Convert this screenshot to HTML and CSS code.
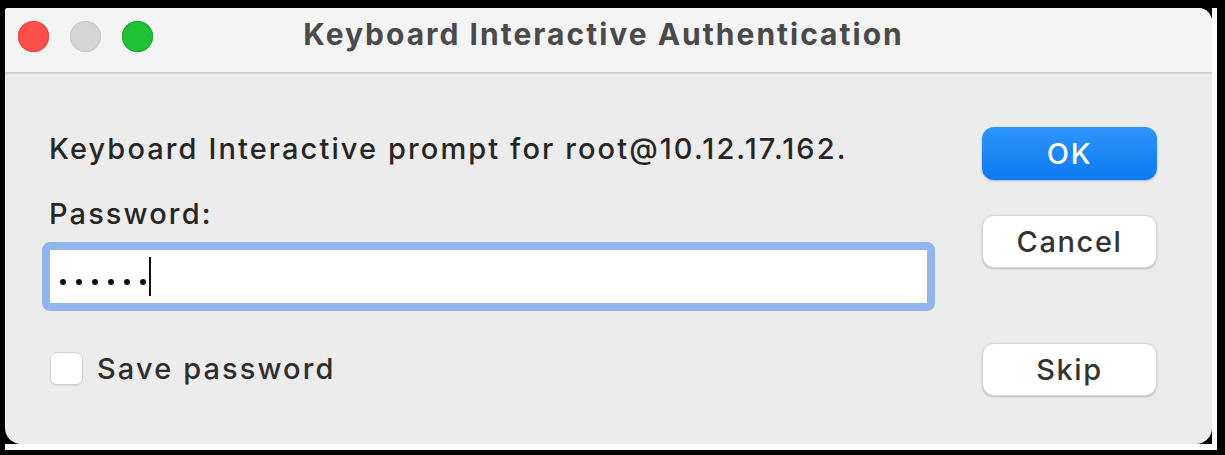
FILE: index.html
```html
<!DOCTYPE html>
<html lang="en">
<head>
<meta charset="utf-8">
<title>Keyboard Interactive Authentication</title>
<link rel="stylesheet" href="styles.css">
</head>
<body>
<div class="frame">
  <div class="window">
    <div class="titlebar">
      <div class="lights">
        <span class="light red"></span>
        <span class="light gray"></span>
        <span class="light green"></span>
      </div>
      <div class="title">Keyboard Interactive Authentication</div>
      <div class="spacer"></div>
    </div>
    <div class="content">
      <div class="main">
        <p class="prompt">Keyboard Interactive prompt for root@10.12.17.162.</p>
        <p class="label">Password:</p>
        <div class="input">
          <span class="dots"><i></i><i></i><i></i><i></i><i></i><i></i></span>
          <span class="caret"></span>
        </div>
        <div class="check"><span class="box"></span><span class="check-text">Save password</span></div>
      </div>
      <div class="buttons">
        <button class="btn primary">OK</button>
        <button class="btn cancel">Cancel</button>
        <button class="btn skip">Skip</button>
      </div>
    </div>
  </div>
</div>
</body>
</html>
```
FILE: styles.css
```css
* { box-sizing: border-box; }
html, body { margin: 0; padding: 0; }
body {
  background: #000;
  width: 1225px;
  height: 455px;
  overflow: hidden;
  padding: 8px 0 0 5px;
  font-family: Inter, "Liberation Sans", sans-serif;
}
.frame {
  width: 1212px;
  height: 442px;
  border-right: 5px solid #fff;
  border-bottom: 6px solid #fff;
  background: #000;
}
.window {
  width: 1207px;
  height: 436px;
  background: #ececec;
  border-radius: 3px 14px 16px 16px;
  overflow: hidden;
}
.titlebar {
  height: 66px;
  background: #f5f4f5;
  border-bottom: 2px solid #d4d3d4;
  display: grid;
  grid-template-columns: 1fr auto 1fr;
  align-items: start;
}
.lights {
  display: flex;
  gap: 21px;
  padding: 13px 0 0 13px;
}
.light {
  width: 31px;
  height: 31px;
  border-radius: 50%;
}
.red { background: #fc4f4a; box-shadow: inset 0 0 0 1px #e2443f; }
.gray { background: #d6d5d6; box-shadow: inset 0 0 0 1px #c6c5c6; }
.green { background: #1ec234; box-shadow: inset 0 0 0 1px #17a82b; }
.title {
  font-size: 30px;
  line-height: 36px;
  letter-spacing: 2px;
  font-weight: 700;
  color: #4a4a4a;
  padding: 8px 10px 0 0;
}
.content {
  display: flex;
  padding: 0 55px 0 37px;
  gap: 47px;
}
.main {
  width: 893px;
  padding-top: 59px;
}
.prompt, .label {
  margin: 0;
  font-size: 29px;
  line-height: 32px;
  font-weight: 500;
  letter-spacing: 2.1px;
  color: #262626;
  padding-left: 7px;
}
.label { margin-top: 33px; }
.input {
  margin-top: 12px;
  height: 69px;
  background: #fff;
  border: 8px solid #93b5ee;
  border-radius: 8px;
  display: flex;
  align-items: center;
  padding-left: 10px;
}
.dots {
  display: flex;
  gap: 10px;
  margin-top: 10px;
}
.dots i {
  width: 6px;
  height: 6px;
  border-radius: 50%;
  background: #111;
}
.caret {
  width: 2px;
  height: 39px;
  background: #111;
  margin-left: 3px;
}
.check {
  margin-top: 37px;
  display: flex;
  align-items: center;
  gap: 14px;
  padding-left: 8px;
  height: 40px;
}
.box {
  width: 33px;
  height: 33px;
  border-radius: 7px;
  background: #fff;
  border: 1px solid #d3d3d3;
  box-shadow: 0 1px 1px rgba(0,0,0,0.08);
}
.check-text {
  font-size: 29px;
  font-weight: 500;
  letter-spacing: 2.1px;
  color: #2e2e2e;
}
.buttons {
  width: 175px;
  padding-top: 53px;
  display: flex;
  flex-direction: column;
}
.btn {
  width: 175px;
  height: 53px;
  border-radius: 12px;
  font-family: Inter, "Liberation Sans", sans-serif;
  font-size: 29px;
  font-weight: 500;
  letter-spacing: 1.6px;
  color: #333;
  background: #fff;
  border: 1px solid #d6d6d6;
  box-shadow: 0 1px 2px rgba(0,0,0,0.22);
  padding: 0;
}
.primary {
  background: linear-gradient(#2f95fb, #0c7af1);
  color: #fff;
  border: none;
  box-shadow: 0 1px 2px rgba(0,60,160,0.3);
}
.cancel { margin-top: 35px; }
.skip { margin-top: 75px; }
```
